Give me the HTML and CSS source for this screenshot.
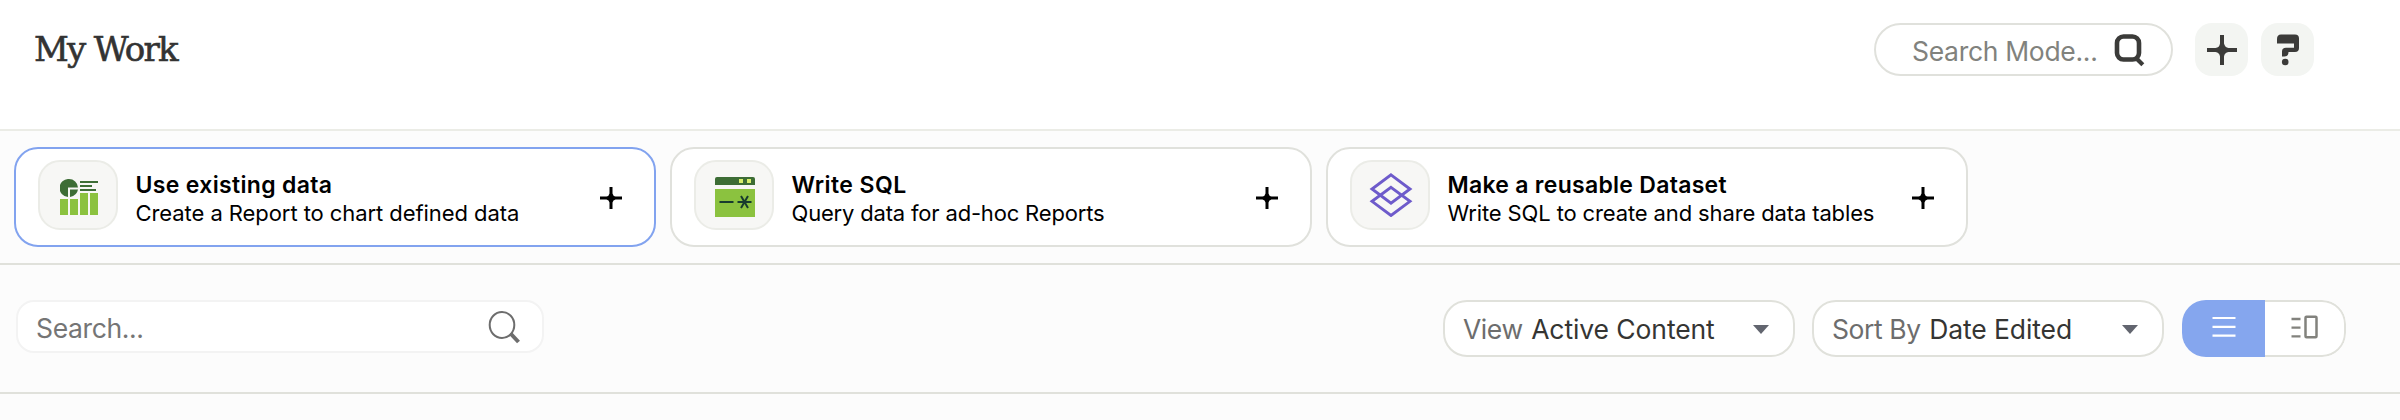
FILE: index.html
```html
<!DOCTYPE html>
<html lang="en">
<head>
<meta charset="utf-8">
<title>My Work</title>
<link rel="stylesheet" href="styles.css">
</head>
<body>
<header class="topbar">
  <h1 class="page-title">My Work</h1>
  <div class="top-actions">
    <div class="mode-search">
      <span class="mode-placeholder">Search Mode...</span>
      <svg width="32" height="34" viewBox="0 0 32 34"><rect x="3" y="3.500" width="22" height="23" rx="6.500" fill="none" stroke="#3b3b39" stroke-width="4.600"/><path d="M22 25l6.800 6.800" stroke="#3b3b39" stroke-width="4.200"/></svg>
    </div>
    <button class="icon-btn" aria-label="Create"><svg width="32" height="32" viewBox="0 0 32 32"><path d="M14 1h4v8.500q1 4 4.500 4.500H31v4h-8.500q-4 .5-4.500 4.500V31h-4v-8.500q-.5-4-4.500-4.500H1v-4h8.500q4-.5 4.500-4.500z" fill="#3b3b39"/></svg></button>
    <button class="icon-btn help" aria-label="Help"><svg width="24" height="32" viewBox="0 0 24 32"><path d="M5 .5h14q4 0 4 4V14q0 4-4 4h-6.500q0 4.500-4 4.500H6v-5q0-3.700 4-3.700h8V9.500H1V5q0-4.500 4-4.500z" fill="#3b3b39"/><circle cx="9.200" cy="28" r="3.300" fill="#3b3b39"/></svg></button>
  </div>
</header>
<section class="cards">
  <a class="card active">
    <span class="card-icon"><svg width="38" height="36" viewBox="0 0 38 36"><path d="M0 20h8v16H0zM10 20h8v16h-8zM20 14h8v22h-8zM30 14h8v22h-8z" fill="#8bc23f"/><path d="M9 0a9 9 0 0 0-1 18V8.500h10A9 9 0 0 0 9 0z" fill="#3d6d35"/><path d="M10 10.500h8q-1 6-8 7.500z" fill="#3d6d35"/><path d="M20 2h18v2H20zM20 6h12v2H20zM20 10h16v2H20z" fill="#3d6d35"/></svg></span>
    <span class="card-text"><strong class="existing-title">Use existing data</strong><span class="existing-note">Create a Report to chart defined data</span></span>
    <svg class="plus" width="22" height="22" viewBox="0 0 22 22"><path d="M9.500 0h3v6.500q.5 2.500 3 3H22v3h-6.500q-2.500.5-3 3V22h-3v-6.500q-.5-2.500-3-3H0v-3h6.500q2.500-.5 3-3z"/></svg>
  </a>
  <a class="card">
    <span class="card-icon"><svg width="40" height="40" viewBox="0 0 40 40"><path d="M0 8V2q0-2 2-2h36q2 0 2 2v6z" fill="#3d6d35"/><path d="M24 2h4v4h-4zM32 2h4v4h-4z" fill="#d7ee6c"/><path d="M0 12h40v28H0z" fill="#8bc23f"/><path d="M4.500 25h14M22.500 25h14M26 19l7 12M33 19l-7 12" fill="none" stroke="#173b2e" stroke-width="2"/></svg></span>
    <span class="card-text"><strong class="sql-title">Write SQL</strong><span class="sql-note">Query data for ad-hoc Reports</span></span>
    <svg class="plus" width="22" height="22" viewBox="0 0 22 22"><path d="M9.500 0h3v6.500q.5 2.500 3 3H22v3h-6.500q-2.500.5-3 3V22h-3v-6.500q-.5-2.500-3-3H0v-3h6.500q2.500-.5 3-3z"/></svg>
  </a>
  <a class="card">
    <span class="card-icon diamond"><svg width="44" height="44" viewBox="0 0 44 44"><g fill="none" stroke="#6e5bcb" stroke-width="2.900"><path d="M22 1.800L41 16 22 30.200 3 16z"/><path d="M22 14.300L41 28.300 22 42.500 3 28.300z"/></g></svg></span>
    <span class="card-text"><strong class="dataset-title">Make a reusable Dataset</strong><span class="dataset-note">Write SQL to create and share data tables</span></span>
    <svg class="plus" width="22" height="22" viewBox="0 0 22 22"><path d="M9.500 0h3v6.500q.5 2.500 3 3H22v3h-6.500q-2.500.5-3 3V22h-3v-6.500q-.5-2.500-3-3H0v-3h6.500q2.500-.5 3-3z"/></svg>
  </a>
</section>
<section class="toolbar">
  <div class="search-box"><span class="placeholder">Search...</span>
    <svg width="34" height="34" viewBox="0 0 34 34"><ellipse cx="14" cy="15" rx="12.300" ry="13" fill="none" stroke="#6d6d6d" stroke-width="2"/><path d="M22.500 23.500l8 8.500" stroke="#6d6d6d" stroke-width="4"/></svg>
  </div>
  <div class="filters">
    <div class="select"><span class="label">View</span><span class="value">Active Content</span><i class="caret"></i></div>
    <div class="select sort"><span class="label">Sort By</span><span class="value">Date Edited</span><i class="caret"></i></div>
    <div class="toggle">
      <span class="seg on"><svg width="24" height="22" viewBox="0 0 24 22"><path d="M.5 2h23M.5 10.800h23M.5 19.600h23" stroke="#fff" stroke-width="2.200"/></svg></span>
      <span class="seg"><svg width="28" height="24" viewBox="0 0 28 24"><path d="M.5 4h9M.5 12.700h9M.5 21.400h9" stroke="#82827d" stroke-width="2.300"/><rect x="14.500" y="1.700" width="11" height="20.500" rx="1" fill="none" stroke="#82827d" stroke-width="2.500"/></svg></span>
    </div>
  </div>
</section>
</body>
</html>
```
FILE: styles.css
```css
* { box-sizing: border-box; }
body { margin: 0; height: 420px; overflow: hidden; background: #fcfcfc; font-family: Inter, "Liberation Sans", sans-serif; color: #000; }
.topbar { height: 131px; padding: 23px 86px 0 34px; display: flex; justify-content: space-between; align-items: flex-start; background: #fff; border-bottom: 2px solid #ebece6; }
.page-title { margin: 0; font: 400 34px/53px "DejaVu Serif", serif; letter-spacing: -1.700px; color: #333; -webkit-text-stroke: .6px #333; }
.top-actions { display: flex; }
.mode-search { width: 299px; height: 53px; margin-right: 22px; padding: 0 25px 0 36px; display: flex; align-items: center; justify-content: space-between; border: 2px solid #e0e1dc; border-radius: 27px; white-space: nowrap; }
.mode-placeholder { margin-top: 2px; font-size: 26.500px; letter-spacing: -.310px; color: #81827d; }
.icon-btn { width: 53px; height: 53px; margin-right: 13px; padding: 0; border: 0; border-radius: 17px; background: #f3f5f2; display: flex; align-items: center; justify-content: center; }
.help { margin-right: 0; }
.cards { height: 134px; padding: 16px 14px 0; display: flex; gap: 14px; border-bottom: 2px solid #e0e1db; }
.card { width: 642px; height: 100px; padding: 0 32px 0 22px; display: flex; align-items: center; background: #fff; border: 2px solid #e0e1dc; border-radius: 24px; white-space: nowrap; }
.card.active { border-color: #82a3ef; }
.card-icon { width: 80px; height: 70px; margin: -4px 18px 0 0; padding: 4px 0 0 2px; display: flex; align-items: center; justify-content: center; background: #f7f7f5; border: 2px solid #ebece7; border-radius: 22px; }
.card-icon.diamond { padding-top: 0; }
.card-text { margin: 4px 0 0 -.5px; display: flex; flex-direction: column; flex: 1; font-size: 22px; line-height: 28px; }
.card-text strong { font-size: 23px; font-weight: 600; }
.existing-title { letter-spacing: .330px; }
.existing-note { letter-spacing: -.070px; }
.sql-title { letter-spacing: .450px; }
.sql-note { letter-spacing: -.180px; }
.dataset-title { letter-spacing: .280px; }
.dataset-note { letter-spacing: -.130px; }
.plus { margin-top: 2px; }
.toolbar { height: 129px; padding: 35px 54px 0 16px; display: flex; justify-content: space-between; align-items: flex-start; border-bottom: 2px solid #e0e1db; }
.search-box { width: 528px; height: 53px; padding: 0 20px 0 18px; display: flex; justify-content: space-between; align-items: center; background: #fff; border: 2px solid #f3f3f3; border-radius: 18px; font-size: 26.500px; color: #757575; }
.placeholder { margin-top: 2px; letter-spacing: -.370px; }
.filters { display: flex; }
.select { width: 352px; height: 57px; margin-right: 17px; padding: 0 24px 0 18px; display: flex; align-items: center; background: #fff; border: 2px solid #e0e1db; border-radius: 24px; font-size: 26.500px; white-space: nowrap; }
.select.sort { margin-right: 18px; }
.label { margin-right: 8.500px; letter-spacing: -.420px; color: #6d6d6d; }
.value { letter-spacing: -.100px; color: #353533; }
.caret { margin: 2px 0 0 auto; border: 8px solid transparent; border-top: 9px solid #62656f; border-bottom: 0; }
.toggle { width: 164px; height: 57px; display: flex; border-radius: 24px; overflow: hidden; }
.seg { flex: 1; padding-bottom: 4px; display: flex; align-items: center; justify-content: center; background: #fff; border: 2px solid #e0e1db; border-left: 0; border-radius: 0 24px 24px 0; }
.seg.on { flex: 0 0 83px; background: #85a6ee; border: 0; border-radius: 0; }
```
